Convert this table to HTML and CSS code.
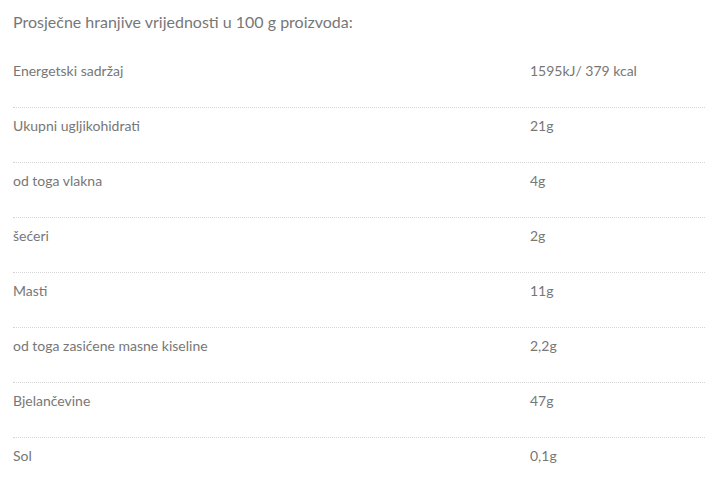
FILE: index.html
```html
<!DOCTYPE html>
<html lang="hr">
<head>
<meta charset="utf-8">
<link rel="stylesheet" href="styles.css">
</head>
<body>
<div class="nutrition">
  <h3 class="title">Prosječne hranjive vrijednosti u 100 g proizvoda:</h3>
  <div class="table">
    <div class="row"><span class="name">Energetski sadržaj</span><span class="value">1595kJ/ 379 kcal</span></div>
    <div class="row"><span class="name">Ukupni ugljikohidrati</span><span class="value">21g</span></div>
    <div class="row"><span class="name">od toga vlakna</span><span class="value">4g</span></div>
    <div class="row"><span class="name">šećeri</span><span class="value">2g</span></div>
    <div class="row"><span class="name">Masti</span><span class="value">11g</span></div>
    <div class="row"><span class="name">od toga zasićene masne kiseline</span><span class="value">2,2g</span></div>
    <div class="row"><span class="name">Bjelančevine</span><span class="value">47g</span></div>
    <div class="row last"><span class="name">Sol</span><span class="value">0,1g</span></div>
  </div>
</div>
</body>
</html>
```

FILE: styles.css
```css
html, body {
  margin: 0;
  padding: 0;
  background: #ffffff;
}
body {
  font-family: Lato, "Open Sans", sans-serif;
  color: #777777;
}
.nutrition {
  padding: 10px 0 0 13px;
}
.title {
  margin: 0;
  font-size: 16px;
  font-weight: 400;
  line-height: 24px;
  color: #777777;
}
.table {
  margin-top: 19px;
}
.row {
  display: grid;
  grid-template-columns: 517px 1fr;
  height: 55px;
  box-sizing: border-box;
  border-bottom: 1px dotted #d4d4d4;
  font-size: 14px;
  line-height: 20px;
  padding-top: 8px;
}
.row.last {
  border-bottom: none;
}
```
